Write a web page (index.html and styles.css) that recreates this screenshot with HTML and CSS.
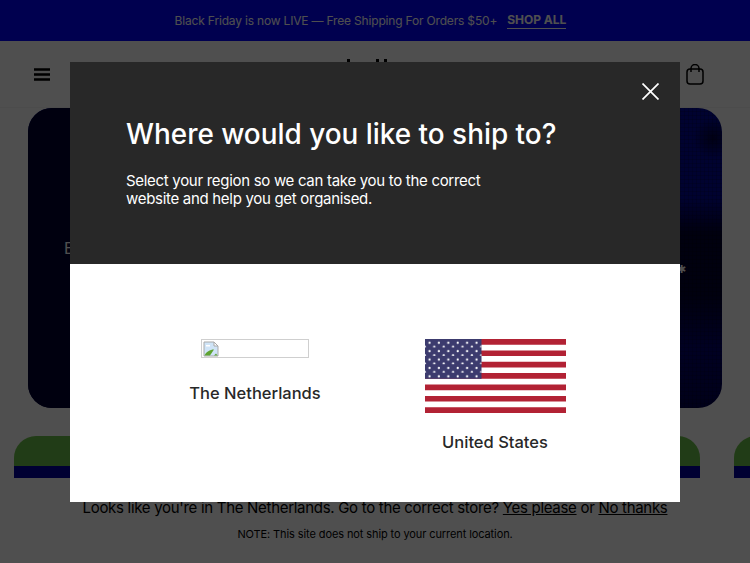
FILE: index.html
```html
<!DOCTYPE html>
<html lang="en">
<head>
    <meta charset="UTF-8">
    <meta name="viewport" content="width=device-width, initial-scale=1.0">
    <title>Where would you like to ship to?</title>
    <link rel="stylesheet" href="styles.css">
</head>
<body>
    <div class="announcement">
        <span>Black Friday is now LIVE — Free Shipping For Orders $50+</span>
        <a class="announcement-link" href="#">SHOP ALL</a>
    </div>

    <header class="site-header">
        <svg class="icon-menu" width="16" height="13" viewBox="0 0 16 13">
            <path d="M0 1.5H16M0 6.5H16M0 11.5H16" stroke="#000" stroke-width="2.4" fill="none"/>
        </svg>
        <svg class="logo" width="42" height="30" viewBox="0 0 42 30">
            <path d="M0 0H3V30H0ZM29 0H32V30H29ZM37 0H40V30H37Z" fill="#000"/>
        </svg>
        <svg class="icon-bag" width="18" height="21" viewBox="0 0 18 21" fill="none" stroke="#000" stroke-width="1.5">
            <rect x="1" y="5" width="16" height="15" rx="3"/>
            <path d="M5 8V4.5a4 4 0 0 1 8 0V8"/>
        </svg>
    </header>

    <section class="hero">
        <p class="hero-text">E</p>
        <span class="hero-star">✱</span>
    </section>

    <div class="tiles">
        <div class="tile"></div>
        <div class="tile"></div>
        <div class="tile"></div>
    </div>

    <div class="geo-notice">
        <p class="geo-line">Looks like you're in The Netherlands. Go to the correct store? <a href="#">Yes please</a> or <a href="#">No thanks</a></p>
        <p class="geo-note">NOTE: This site does not ship to your current location.</p>
    </div>

    <div class="overlay"></div>

    <div class="modal">
        <div class="modal-head">
            <svg class="modal-close" width="17" height="17" viewBox="0 0 17 17">
                <path d="M0.5 0.5L16.5 16.5M16.5 0.5L0.5 16.5" stroke="#fff" stroke-width="1.7" fill="none"/>
            </svg>
            <h1>Where would you like to ship to?</h1>
            <p>Select your region so we can take you to the correct<br>website and help you get organised.</p>
        </div>
        <div class="modal-body">
            <a class="region" href="#">
                <span class="broken-img">
                    <svg width="16" height="16" viewBox="0 0 16 16">
                        <path d="M1 1H11L15 5V15H1Z" fill="#cfe4f7" stroke="#a9a9a9" stroke-width="1"/>
                        <path d="M11 1V5H15Z" fill="#fff" stroke="#a9a9a9" stroke-width="1"/>
                        <path d="M3 4h4v1.500H3z" fill="#fff"/>
                        <path d="M1.500 14.500C3 11 7 8.500 11 8.500L7 14.500Z" fill="#5fa331"/>
                        <path d="M11 14.500L13 12.500L14.500 14.500Z" fill="#5fa331"/>
                    </svg>
                </span>
                <span class="region-name">The Netherlands</span>
            </a>
            <a class="region" href="#">
                <svg class="flag" width="141" height="74" viewBox="0 0 141 74">
                    <defs>
                        <pattern id="stars" width="9.400" height="8.400" patternUnits="userSpaceOnUse">
                            <circle cx="4.500" cy="3.700" r="1.100" fill="#fff"/>
                            <circle cx="9.200" cy="7.900" r="1.100" fill="#fff"/>
                            <circle cx="0" cy="7.900" r="1.100" fill="#fff"/>
                        </pattern>
                    </defs>
                    <rect width="141" height="74" fill="#fff"/>
                    <path fill="#b22234" d="M0 0h141v5.700H0zM0 11.400h141v5.700H0zM0 22.800h141v5.700H0zM0 34.100h141v5.700H0zM0 45.500h141v5.700H0zM0 56.900h141v5.700H0zM0 68.300h141V74H0z"/>
                    <rect width="56.500" height="39.800" fill="#3c3b6e"/>
                    <rect width="56.500" height="39.800" fill="url(#stars)"/>
                </svg>
                <span class="region-name">United States</span>
            </a>
        </div>
    </div>
</body>
</html>
```

FILE: styles.css
```css
* {
    box-sizing: border-box;
}

html, body {
    height: 563px;
    overflow: hidden;
}

body {
    margin: 0;
    font-family: 'Inter', sans-serif;
    color: #000;
    background: #fff;
    position: relative;
}

.announcement {
    height: 41px;
    padding-right: 9px;
    background: #0000ff;
    color: #fff;
    font-size: 12px;
    letter-spacing: -0.18px;
    display: flex;
    align-items: center;
    justify-content: center;
    gap: 10px;
}

.announcement-link {
    color: #fff;
    font-weight: 700;
    letter-spacing: 0;
    text-decoration: none;
    border-bottom: 1px solid #fff;
    padding-bottom: 1px;
}

.site-header {
    height: 67px;
    border-bottom: 1px solid #f4f4f4;
    padding: 0 46px 0 34px;
    display: flex;
    align-items: center;
    justify-content: space-between;
}

.hero {
    height: 300px;
    margin: 0 28px;
    border-radius: 24px;
    position: relative;
    color: #fff;
    background:
        repeating-linear-gradient(90deg, rgba(0, 0, 0, .15) 0 1px, transparent 1px 4px),
        repeating-linear-gradient(0deg, rgba(0, 0, 0, .15) 0 1px, transparent 1px 4px),
        radial-gradient(circle at 685px 30px, rgba(0, 0, 30, .7) 0, transparent 20px),
        linear-gradient(180deg, #00089a 0, #00089a 30%, #000030 42%, #000030 62%, #000070 80%, #000050 100%);
    overflow: hidden;
}

.hero::before {
    content: "";
    position: absolute;
    top: 0;
    bottom: 0;
    left: 0;
    width: 200px;
    background: #000030;
}

.hero-text {
    position: absolute;
    left: 36px;
    top: 130px;
    margin: 0;
    font-size: 16px;
}

.hero-star {
    position: absolute;
    right: 36px;
    top: 154px;
    font-size: 11px;
}

.tiles {
    display: flex;
    gap: 34px;
    margin: 28px 0 0 14px;
    overflow: hidden;
}

.tile {
    flex: none;
    width: 326px;
    height: 42px;
    border-radius: 22px 22px 0 0;
    background: linear-gradient(180deg, #6cc24a 0, #6cc24a 30px, #0000a0 30px);
}

.geo-notice {
    margin-top: 20px;
    text-align: center;
}

.geo-line {
    margin: 0;
    font-size: 15px;
    letter-spacing: -0.3px;
    line-height: 20px;
}

.geo-line a {
    color: #000;
}

.geo-note {
    margin: 9px 0 0;
    font-size: 11px;
    letter-spacing: -0.1px;
    line-height: 14px;
}

.overlay {
    position: absolute;
    inset: 0;
    background: rgba(0, 0, 0, .69);
}

.modal {
    position: absolute;
    left: 70px;
    top: 62px;
    width: 610px;
    height: 440px;
    background: #fff;
    display: flex;
    flex-direction: column;
}

.modal-head {
    height: 202px;
    background: #282828;
    color: #fff;
    padding: 54px 56px 0;
    position: relative;
}

.modal-close {
    position: absolute;
    right: 21px;
    top: 21px;
}

.modal-head h1 {
    margin: 0;
    font-size: 27.900px;
    line-height: 36px;
    font-weight: 500;
}

.modal-head p {
    margin: 20px 0 0;
    font-size: 15px;
    letter-spacing: -0.3px;
    line-height: 18px;
}

.modal-body {
    flex: 1;
    display: flex;
    justify-content: center;
    align-items: flex-start;
    gap: 99px;
    padding-top: 75px;
}

.region {
    width: 141px;
    display: flex;
    flex-direction: column;
    align-items: center;
    color: #282828;
    text-decoration: none;
}

.broken-img {
    width: 108px;
    height: 19px;
    margin-bottom: 6px;
    border: 1px solid #cfcfcf;
    padding: 1px;
    display: flex;
}

.region-name {
    margin-top: 19px;
    font-size: 16.500px;
    line-height: 20px;
    font-weight: 500;
    white-space: nowrap;
}

.flag {
    display: block;
}
```
